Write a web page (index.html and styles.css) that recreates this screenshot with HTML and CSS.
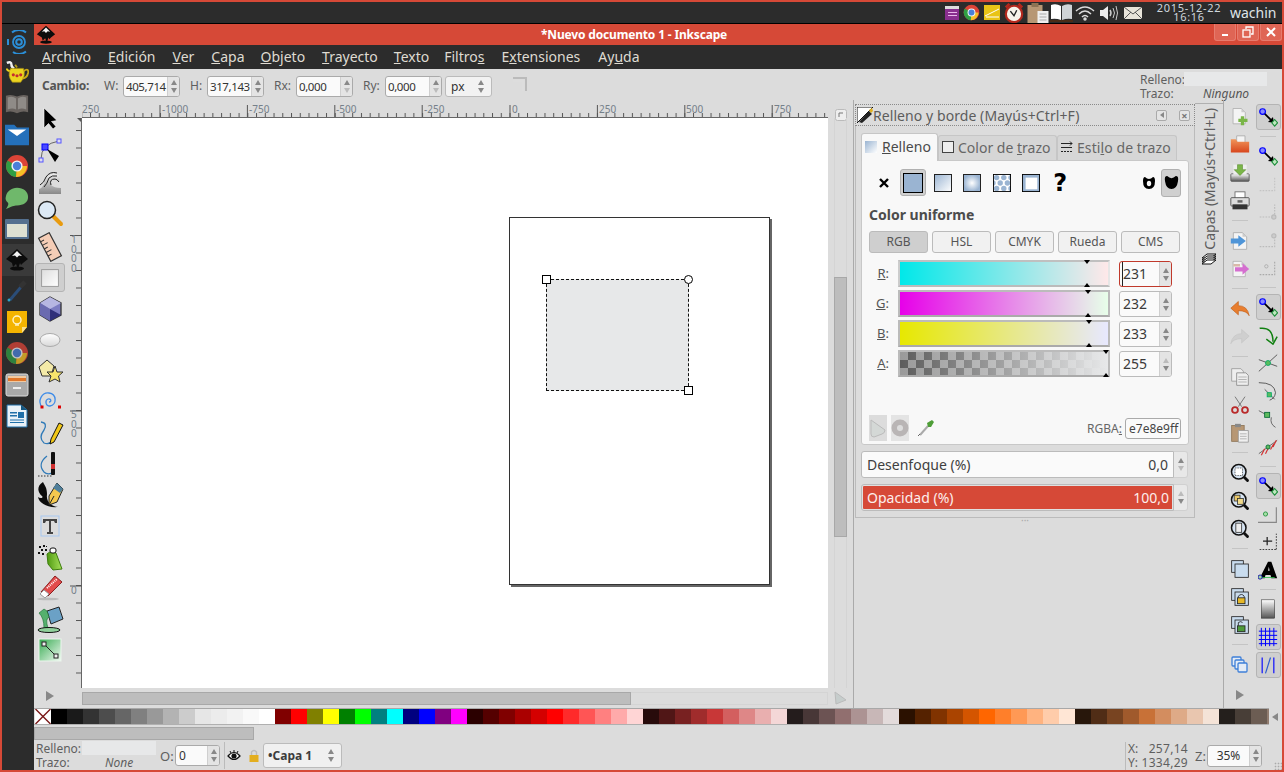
FILE: index.html
```html
<!DOCTYPE html>
<html lang="es">
<head>
<meta charset="utf-8">
<title>*Nuevo documento 1 - Inkscape</title>
<link rel="stylesheet" href="styles.css">
</head>
<body>
<svg class="defs" xmlns="http://www.w3.org/2000/svg">
  <defs>
    <linearGradient id="gGrey" x1="0" y1="0" x2="0" y2="1"><stop offset="0" stop-color="#eee"/><stop offset="1" stop-color="#888"/></linearGradient>
    <linearGradient id="gBlue" x1="0" y1="0" x2="1" y2="1"><stop offset="0" stop-color="#9ab4d2"/><stop offset="1" stop-color="#fff"/></linearGradient>
    <radialGradient id="gRad"><stop offset="0" stop-color="#fff"/><stop offset="1" stop-color="#9ab4d2"/></radialGradient>
    <linearGradient id="gGreen" x1="0" y1="0" x2="1" y2="1"><stop offset="0" stop-color="#35aa50"/><stop offset="1" stop-color="#f0faf1"/></linearGradient>
    <linearGradient id="gOrange" x1="0" y1="0" x2="0" y2="1"><stop offset="0" stop-color="#f0955a"/><stop offset="1" stop-color="#d8461c"/></linearGradient>
    <linearGradient id="gSq" x1="0" y1="0" x2="1" y2="1"><stop offset="0" stop-color="#ddd"/><stop offset="1" stop-color="#fff"/></linearGradient>
    <linearGradient id="gCyl" x1="0" y1="0" x2="0" y2="1"><stop offset="0" stop-color="#fff"/><stop offset="1" stop-color="#555"/></linearGradient>
    <linearGradient id="gEll" x1="0" y1="0" x2="0" y2="1"><stop offset="0" stop-color="#fff"/><stop offset="1" stop-color="#d8d8d8"/></linearGradient>
    <linearGradient id="gCan" x1="0" y1="0" x2="1" y2="0"><stop offset="0" stop-color="#4f9a10"/><stop offset="1" stop-color="#a6e05a"/></linearGradient>
  </defs>
  <symbol id="chrome" viewBox="0 0 24 24">
    <circle cx="12" cy="12" r="11" fill="#dc4437"/>
    <path d="M12 12L2.500 6.500A11 11 0 0 0 11 23Z" fill="#2f9e44"/>
    <path d="M12 12H22A11 11 0 0 1 11 23Z" fill="#f6c026"/>
    <circle cx="12" cy="12" r="5.600" fill="#f4f4f4"/>
    <circle cx="12" cy="12" r="4.200" fill="#4a80d8"/>
  </symbol>
  <symbol id="ink" viewBox="0 0 24 24">
    <path d="M12 1L23 11 18 15 16 17 15 15 13 21 11 16 8 19 7 15 1 11Z" fill="#0c0c0c"/>
    <path d="M12 3L17 8 14 7.500 12 9.500 10 7.500 7 8Z" fill="#f4f4f4"/>
    <ellipse cx="12" cy="20.500" rx="7" ry="2" fill="#0c0c0c"/>
  </symbol>
  <symbol id="snapnode" viewBox="0 0 24 24">
    <path d="M7 7L18 18" stroke="#000" stroke-width="2"/>
    <path d="M12 18L19 19 18 12Z" fill="#000"/>
    <circle cx="5.500" cy="5.500" r="3.400" fill="#8a8aff" stroke="#00f" stroke-width="1.400"/>
    <path d="M20 15L23.500 19 20 23 16.500 19Z" fill="#bfe7bf" stroke="#1c8f3a" stroke-width="1.300"/>
  </symbol>
  <symbol id="doc" viewBox="0 0 24 24">
    <path d="M4 2H15L20 7V22H4Z" fill="#f4f4f4" stroke="#aaa"/>
    <path d="M15 2V7H20Z" fill="#ccc"/>
  </symbol>
  <symbol id="lens" viewBox="0 0 24 24">
    <path d="M15 15L21 21" stroke="#111" stroke-width="3.400" stroke-linecap="round"/>
    <circle cx="10.500" cy="10.500" r="8.700" fill="#d7e4f2" stroke="#111" stroke-width="1.800"/>
  </symbol>
  <symbol id="squares" viewBox="0 0 24 24">
    <rect x="2" y="2" width="14" height="14" fill="#c9dcee" stroke="#222"/>
    <rect x="6" y="6" width="16" height="16" fill="#c9dcee" stroke="#222"/>
  </symbol>
</svg>

<header class="panel">
  <svg class="ind ind-s" viewBox="0 0 14 14"><rect width="14" height="14" fill="#8a2f8f"/><rect x="0" y="0" width="14" height="3" fill="#ddd"/><rect x="3" y="6" width="9" height="1" fill="#e8b8ea"/><rect x="3" y="9" width="9" height="1" fill="#e8b8ea"/></svg>
  <svg class="ind ind-c"><use href="#chrome"/></svg>
  <svg class="ind ind-n" viewBox="0 0 16 15"><rect width="16" height="15" fill="#e9c416"/><path d="M1 11L15 4M2 12H15" stroke="#fff"/></svg>
  <svg class="ind ind-k" viewBox="0 0 22 22"><path d="M2 5L6 1M20 5L16 1" stroke="#b3281d" stroke-width="3"/><circle cx="11" cy="12" r="9" fill="#f7f3ea" stroke="#b3281d" stroke-width="2.400"/><path d="M7 9L11 14 14 8" fill="none" stroke="#222" stroke-width="1.500"/></svg>
  <svg class="ind ind-p" viewBox="0 0 22 20"><rect x="0" y="2" width="15" height="18" fill="#b79774"/><rect x="4" y="0" width="7" height="4" fill="#8d7354"/><path d="M10 8H21V20H10Z" fill="#efefef"/><path d="M12 11H19M12 14H19M12 17H19" stroke="#aaa"/></svg>
  <svg class="ind ind-b" viewBox="0 0 23 20"><path d="M1 2Q6 0 11 3V17Q6 15 1 16Z" fill="#fff"/><path d="M12 3Q17 0 22 2V16Q17 15 12 17Z" fill="#cfd3d6"/><path d="M0 17H23V19H0Z" fill="#4a2c17"/></svg>
  <svg class="ind ind-w" viewBox="0 0 20 16" fill="none" stroke="#ddd" stroke-width="1.500"><path d="M1 6Q10 -2 19 6"/><path d="M4 9Q10 3 16 9"/><path d="M7 12Q10 9 13 12"/><circle cx="10" cy="14" r="1" fill="#ddd"/></svg>
  <svg class="ind ind-v" viewBox="0 0 20 16" fill="none" stroke="#ccc"><path d="M1 5H4L9 1V15L4 11H1Z" fill="#eee" stroke="none"/><path d="M11 5Q13 8 11 11" stroke-width="1.500"/><path d="M14 3Q17 8 14 13"/><path d="M17 1Q20 8 17 15"/></svg>
  <svg class="ind ind-m" viewBox="0 0 18 12"><rect width="18" height="12" fill="#e8e4da"/><path d="M0 0L9 7 18 0M0 12L7 5M18 12L11 5" fill="none" stroke="#555"/></svg>
  <div class="clock"><span>2015-12-22</span><span>16:16</span></div>
  <span class="user">wachin</span>
</header>

<div class="main">
  <nav class="launcher">
    <div class="lt"><svg viewBox="0 0 24 24" fill="none" stroke="#2b8fd8"><circle cx="14" cy="12" r="2.800" stroke-width="2"/><circle cx="14" cy="12" r="6" stroke-width="1.800"/><path d="M7 2.500A11 11 0 0 1 21 2.500M21 21.500A11 11 0 0 1 8 22M3 9V15" stroke-width="2"/></svg></div>
    <div class="lt"><svg viewBox="0 0 26 26"><path d="M2 2Q7 0 7 4 7 7 10 8" fill="none" stroke="#f2f2f2" stroke-width="2.600"/><path d="M11 4L13 7" stroke="#b49a18" stroke-width="2"/><path d="M6 8H20Q23 16 17 23H8Q2 16 6 8Z" fill="#ecd41f" stroke="#a88f12" stroke-width=".7"/><path d="M20 11Q26 7 25 13 24 18 19 19" fill="none" stroke="#c9a916" stroke-width="2"/><path d="M5 11Q2 10 2 8" fill="none" stroke="#ecd41f" stroke-width="2"/><circle cx="9" cy="15" r="1.700" fill="#c62e2e"/><circle cx="13" cy="16" r="1.700" fill="#c62e2e"/><circle cx="17" cy="15" r="1.700" fill="#c62e2e"/></svg></div>
    <div class="lt"><svg viewBox="0 0 26 22"><path d="M1 2Q7 0 13 3 19 0 25 2V20Q19 18 13 21 7 18 1 20Z" fill="#6a6460"/><path d="M3 4Q8 2 12 5V17Q8 15 3 17ZM14 5Q18 2 23 4V17Q18 15 14 17Z" fill="#8f8b87"/></svg></div>
    <div class="lt"><svg viewBox="0 0 26 22"><path d="M0 0H10L13 3H26V22H0Z" fill="#2470ba"/><path d="M3 5H23L13 12Z" fill="#fff"/></svg></div>
    <div class="lt"><svg><use href="#chrome"/></svg></div>
    <div class="lt"><svg viewBox="0 0 26 24"><path d="M13 1C20 1 25 5 25 11S20 20 13 20C10 20 7 21 1 24 4 20 4 18 3 17 1 15 0 13 1 10 2 5 7 1 13 1Z" fill="#6fb86b"/></svg></div>
    <div class="lt"><svg viewBox="0 0 24 20"><rect width="24" height="20" rx="1" fill="#54708f"/><rect x="2" y="5" width="20" height="13" fill="#dde0d2"/></svg></div>
    <div class="lt lt-on"><svg><use href="#ink"/></svg></div>
    <div class="lt"><svg viewBox="0 0 24 24"><path d="M5 21L16 8" stroke="#2b4d78" stroke-width="3"/><path d="M15 8L20 3" stroke="#333" stroke-width="5"/><circle cx="4" cy="21" r="1.500" fill="#2ba4c9"/></svg></div>
    <div class="lt"><svg viewBox="0 0 24 24"><path d="M2 1H22V17L17 23H2Z" fill="#f4b400"/><path d="M22 17L17 23V17Z" fill="#fbe08a"/><circle cx="12" cy="10" r="4" fill="none" stroke="#fff5cc" stroke-width="1.400"/><path d="M10 15H14" stroke="#fff5cc" stroke-width="1.400"/></svg></div>
    <div class="lt"><svg class="dim"><use href="#chrome"/></svg></div>
    <div class="lt"><svg viewBox="0 0 24 24"><rect x="1" y="1" width="22" height="22" rx="2" fill="#a9a9a9" stroke="#ddd"/><rect x="3" y="3" width="18" height="6" fill="#f1c9a0"/><rect x="3" y="5" width="18" height="3" fill="#e0762a"/><rect x="8" y="14" width="8" height="2" fill="#eee"/></svg></div>
    <div class="lt"><svg viewBox="0 0 22 24"><path d="M1 1H15L21 6V23H1Z" fill="#e9f2f8" stroke="#1f6fa8"/><path d="M15 1L21 6H15Z" fill="#15567f"/><rect x="4" y="8" width="7" height="1.500" fill="#1f6fa8"/><rect x="4" y="11" width="7" height="1.500" fill="#1f6fa8"/><rect x="12" y="8" width="6" height="6" fill="#1f6fa8"/><path d="M4 16H18M4 18.500H18" stroke="#1f6fa8"/></svg></div>
  </nav>

  <div class="window">
    <div class="titlebar">
      <svg class="appicon"><use href="#ink"/></svg>
      <span class="title">*Nuevo documento 1 - Inkscape</span>
      <div class="wbtns">
        <span class="wbtn"><svg viewBox="0 0 12 12"><path d="M3 9H9" stroke="#fff" stroke-width="2"/></svg></span>
        <span class="wbtn"><svg viewBox="0 0 12 12" fill="none" stroke="#fff" stroke-width="1.300"><rect x="1" y="4" width="7" height="7"/><path d="M4 3V1H11V8H9"/></svg></span>
        <span class="wbtn"><svg viewBox="0 0 12 12"><path d="M2 2L10 10M10 2L2 10" stroke="#fff" stroke-width="2"/></svg></span>
      </div>
    </div>
    <div class="menubar">
      <span><u>A</u>rchivo</span><span class="m2"><u>E</u>dición</span><span class="m3"><u>V</u>er</span><span class="m4"><u>C</u>apa</span><span class="m5"><u>O</u>bjeto</span><span class="m6"><u>T</u>rayecto</span><span class="m7"><u>T</u>exto</span><span class="m8">Filtro<u>s</u></span><span class="m9">E<u>x</u>tensiones</span><span class="m10">Ay<u>u</u>da</span>
    </div>
    <div class="cmdbar">
      <b class="cambio">Cambio:</b>
      <label class="cl cl-w">W:</label><span class="num"><span class="val">405,714</span><span class="spin"><i class="up"></i><i class="dn"></i></span></span>
      <label class="cl cl-h">H:</label><span class="num"><span class="val">317,143</span><span class="spin"><i class="up"></i><i class="dn"></i></span></span>
      <label class="cl cl-rx">Rx:</label><span class="num"><span class="val">0,000</span><span class="spin"><i class="up"></i><i class="dn off"></i></span></span>
      <label class="cl cl-ry">Ry:</label><span class="num"><span class="val">0,000</span><span class="spin"><i class="up"></i><i class="dn off"></i></span></span>
      <span class="unit">px<span class="spin bare"><i class="up"></i><i class="dn"></i></span></span>
      <svg class="corner" viewBox="0 0 16 16" fill="none" stroke="#bbb" stroke-width="2"><path d="M1 2H14V15"/><path d="M1 5H11V15" stroke="#ddd"/></svg>
      <div class="selstyle">
        <div class="ss-row"><span class="ss-l">Relleno:</span><span class="ss-sw"></span></div>
        <div class="ss-row"><span class="ss-l">Trazo:</span><em class="ss-n">Ninguno</em></div>
      </div>
    </div>

    <div class="work">
      <aside class="tools">
        <div class="tool"><svg viewBox="0 0 30 30"><path d="M9 3V23L13.500 18.500 18 24 21 21.500 16.500 16.500 22 15.500Z" fill="#000" stroke="#fff" stroke-width=".6"/></svg></div>
        <div class="tool"><svg viewBox="0 0 30 30" fill="none"><path d="M6 23Q6 8 24 5" stroke="#666"/><rect x="7" y="8" width="6" height="6" fill="#4a4aff" stroke="#00f"/><rect x="22" y="3" width="4" height="4" fill="#dde" stroke="#55f"/><rect x="4" y="22" width="4" height="4" fill="#dde" stroke="#55f"/><path d="M12 13L24 20 20 26Z" fill="#000"/></svg></div>
        <div class="tool"><svg viewBox="0 0 30 30"><path d="M4 27V22Q8 21 10 14 14 5 21 7 27 9 24 15 22 12 19 12 15 12 16 18 19 21 26 21V27Z" fill="url(#gGrey)"/><path d="M5 18Q9 16 11 10 15 4 22 6M9 20Q12 17 14 11 17 8 22 9M16 18Q14 12 20 12 22 12 24 15" fill="none" stroke="#222"/></svg></div>
        <div class="tool"><svg viewBox="0 0 30 30"><path d="M18 18L26 26" stroke="#e89b10" stroke-width="4" stroke-linecap="round"/><circle cx="12" cy="12" r="8.500" fill="#dce9f5" stroke="#222" stroke-width="1.500"/></svg></div>
        <div class="tool tool-gap"><svg viewBox="0 0 30 30"><g transform="rotate(-28 15 15)"><rect x="9" y="2" width="12" height="26" fill="#f5cdb6" stroke="#333" stroke-width="1.200"/><path d="M9 6H13M9 10H15M9 14H13M9 18H15M9 22H13" stroke="#333"/></g></svg></div>
        <div class="tool tool-on"><svg viewBox="0 0 30 30"><rect x="6" y="6" width="18" height="18" fill="url(#gSq)" stroke="#999"/></svg></div>
        <div class="tool"><svg viewBox="0 0 30 30"><path d="M15 3L26 9V21L15 27 5 21V9Z" fill="#7c7cc2" stroke="#333" stroke-width="1.300"/><path d="M15 3L26 9 15 15 5 9Z" fill="#b6b6e2"/><path d="M15 15L26 21 15 27Z" fill="#2f2f7a"/><path d="M5 9L15 15V27L5 21Z" fill="#6a6ab0"/></svg></div>
        <div class="tool"><svg viewBox="0 0 30 30"><ellipse cx="15" cy="15" rx="10" ry="6.500" fill="url(#gEll)" stroke="#aaa"/></svg></div>
        <div class="tool"><svg viewBox="0 0 30 30"><path d="M4 11L12 4 19 10 16 20 7 20Z" fill="#f4eaa8" stroke="#333"/><path d="M20 10L22 16 28 16 23.500 20 25 26 20 23 14 26 16 20 12 16 18 16Z" fill="#f7e46c" stroke="#333"/></svg></div>
        <div class="tool"><svg viewBox="0 0 30 30" fill="none"><path d="M7 20C2 14 7 5 14 6 22 7 22 18 15 19 10 19 10 13 13 12 16 11 17 15 14 15" stroke="#3d8be8" stroke-width="1.300"/><rect x="5.500" y="18.500" width="3" height="3" fill="#d00"/><rect x="23" y="18.500" width="3" height="3" fill="#d00"/></svg></div>
        <div class="tool"><svg viewBox="0 0 30 30" fill="none"><path d="M6 4Q13 5 9 12 3 20 9 25 14 27 17 23" stroke="#2f7ab8" stroke-width="1.300"/><path d="M24 5L28 7 19 24 15 26 16 21Z" fill="#f2c818" stroke="#111"/></svg></div>
        <div class="tool"><svg viewBox="0 0 30 30" fill="none"><path d="M12 7Q2 15 9 23 12 26 17 24" stroke="#2f7ab8" stroke-width="1.200"/><path d="M3 27H17" stroke="#333" stroke-dasharray="1.500 1.500"/><rect x="16" y="3" width="4" height="23" rx="1" fill="#111"/><rect x="16" y="15" width="4" height="5" fill="#d03030"/></svg></div>
        <div class="tool"><svg viewBox="0 0 30 30"><path d="M8 2C1 6 3 13 7 16 9 18 5 19 3 17 4 23 12 28 23 27 15 26 11 21 12 14 12 8 10 6 8 2Z" fill="#0c0c0c"/><path d="M22 3L28 9 22 22 14 25 14 16Z" fill="#f4c84e" stroke="#222"/><path d="M22 3L28 9 25 13 18 8Z" fill="#4f7f9a"/><path d="M14 25L19 16" stroke="#222"/></svg></div>
        <div class="tool"><svg viewBox="0 0 30 30"><rect x="6" y="5" width="18" height="20" fill="none" stroke="#a8c8f0"/><path d="M8 8H22V12H20L19 10H16V21H18V23H12V21H14V10H11L10 12H8Z" fill="#444"/></svg></div>
        <div class="tool"><svg viewBox="0 0 30 30"><path d="M12 12Q16 8 21 11L27 27 18 28 13 22Z" fill="url(#gCan)" stroke="#3e7d0d"/><rect x="15" y="6" width="6" height="5" rx="2" fill="#fff" stroke="#111"/><path d="M4 4h2v2h-2zM8 3h2v2h-2zM6 7h2v2h-2zM10 7h2v2h-2zM3 10h2v2h-2zM7 11h2v2h-2zM11 4h1v1h-1z" fill="#111"/></svg></div>
        <div class="tool"><svg viewBox="0 0 30 30"><path d="M20 3L27 9 13 23 6 19Z" fill="#e24c4c" stroke="#8a1f1f"/><path d="M9 17L5 21 10 25 14 21Z" fill="#fff" stroke="#999"/><path d="M12 15L22 6" stroke="#fff" stroke-dasharray="1 1" stroke-width="2"/><ellipse cx="13" cy="26" rx="11" ry="1.300" fill="#bbb"/></svg></div>
        <div class="tool"><svg viewBox="0 0 30 30"><path d="M12 7L24 3 28 15 16 20Z" fill="#6ba1c6" stroke="#222"/><path d="M12 7L9 5 4 9Q9 14 9 24H13Q10 15 14 13Z" fill="#55b06d" stroke="#1a6a30" stroke-width=".6"/><ellipse cx="14" cy="26" rx="11" ry="2.500" fill="#8fd09a" stroke="#111"/></svg></div>
        <div class="tool"><svg viewBox="0 0 30 30"><rect x="4" y="4" width="22" height="22" fill="url(#gGreen)" stroke="#eaf6ec"/><path d="M9 9L21 21" stroke="#222"/><rect x="7" y="7" width="4" height="4" fill="#eee" stroke="#222"/><rect x="19" y="19" width="4" height="4" fill="#eee" stroke="#222"/></svg></div>
        <div class="tool tool-arrow"><i class="tri-r"></i></div>
      </aside>

      <section class="center">
        <div class="ruler-corner"></div>
        <svg class="ruler-top" viewBox="0 0 746 18">
          <defs>
            <pattern id="tickT" patternUnits="userSpaceOnUse" x="8" y="0" width="8.740" height="18"><rect x="0" y="13" width="1" height="4" fill="#555"/></pattern>
          </defs>
          <rect width="746" height="17" fill="url(#tickT)"/>
          <rect y="17" width="746" height="1" fill="#666"/>
          <path d="M78 5V17M165.400 5V17M252.800 5V17M340.200 5V17M428 5V17M515.400 5V17M602.800 5V17M690.200 5V17" stroke="#555"/>
          <g class="rt">
            <text x="0" y="13">250</text><text x="80" y="13">-1000</text><text x="167" y="13">-750</text><text x="254" y="13">-500</text><text x="342" y="13">-250</text><text x="430" y="13">0</text><text x="517" y="13">250</text><text x="604" y="13">500</text><text x="692" y="13">750</text>
          </g>
        </svg>
        <svg class="ruler-left" viewBox="0 0 12 570">
          <defs>
            <pattern id="tickL" patternUnits="userSpaceOnUse" x="0" y="12" width="12" height="17.500"><rect x="6" y="0" width="6" height="1" fill="#555"/></pattern>
          </defs>
          <rect width="11" height="570" fill="url(#tickL)"/>
          <rect x="11" width="1" height="570" fill="#666"/>
          <path d="M7 0H11V4Z" fill="#555"/>
          <path d="M0 117.500H12M0 293H12M0 468H12" stroke="#555"/>
          <g class="rt">
            <text x="1" y="125">1</text><text x="1" y="134.500">0</text><text x="1" y="144">0</text><text x="1" y="153.500">0</text>
            <text x="1" y="300">5</text><text x="1" y="309.500">0</text><text x="1" y="319">0</text>
            <text x="1" y="476">0</text>
          </g>
        </svg>
        <div class="canvas">
          <div class="page">
            <div class="sel">
              <i class="h h-tl"></i><i class="h h-tr"></i><i class="h h-br"></i>
            </div>
          </div>
        </div>
        <div class="vscroll">
          <svg class="vlock" viewBox="0 0 14 14" fill="none" stroke="#777"><rect x="1.500" y="1.500" width="11" height="11" rx="2" fill="#eee" stroke="#bbb"/><path d="M5 9V5M5 5H9"/></svg>
          <div class="vtrough"><div class="vthumb"></div></div>
        </div>
        <div class="hspacer"></div>
        <div class="htrough"><div class="hthumb"></div></div>
        <div class="cmsbtn"><svg viewBox="0 0 14 14"><path d="M2 1L13 9 3 13Z" fill="#c6cdcc" stroke="#bbb"/></svg></div>
      </section>

      <section class="dock">
        <div class="dock-title">
          <svg class="dt-ic" viewBox="0 0 16 16"><path d="M0 0H16L0 16Z" fill="#fff" stroke="#111"/><path d="M2 15L12 4 15 7 5 16Z" fill="#222"/><path d="M12 3L15 1 16 4 14 6Z" fill="#e0b020"/></svg>
          <span class="dt-txt">Relleno y borde (Mayús+Ctrl+F)</span>
          <span class="dt-btn dt-a"><i class="tri-l"></i></span>
          <span class="dt-btn dt-x">×</span>
        </div>
        <div class="dock-body">
          <div class="tabs">
            <div class="tab tab-on"><svg class="tabic" viewBox="0 0 12 12"><rect width="12" height="12" fill="url(#gBlue)"/></svg><span><u>R</u>elleno</span></div>
            <div class="tab tab-2"><svg class="tabic" viewBox="0 0 12 12"><rect x=".5" y=".5" width="11" height="11" fill="#eee" stroke="#444"/></svg><span>Color de <u>t</u>razo</span></div>
            <div class="tab tab-3"><svg class="tabic" viewBox="0 0 12 12" fill="none" stroke="#222"><path d="M0 2.500H11M0 6.500H11"/><path d="M0 10.500H11" stroke-dasharray="2 1"/><path d="M9 .5L11 2.500 9 4.500"/></svg><span>Esti<u>l</u>o de trazo</span></div>
          </div>
          <div class="fillpanel">
            <div class="paints">
              <span class="pb"><svg viewBox="0 0 14 14"><path d="M3 3L11 11M11 3L3 11" stroke="#000" stroke-width="2.400"/></svg></span>
              <span class="pb pb-on"><svg viewBox="0 0 20 20"><rect x=".5" y=".5" width="19" height="19" fill="#9ab4d2" stroke="#000"/></svg></span>
              <span class="pb"><svg viewBox="0 0 18 18"><rect x=".5" y=".5" width="17" height="17" fill="url(#gBlue)" stroke="#222"/></svg></span>
              <span class="pb"><svg viewBox="0 0 18 18"><rect x=".5" y=".5" width="17" height="17" fill="url(#gRad)" stroke="#222"/></svg></span>
              <span class="pb"><svg viewBox="0 0 20 20"><rect width="20" height="20" fill="#fff"/><g fill="#9ab4d2"><circle cx="4" cy="4" r="3"/><circle cx="12" cy="4" r="3"/><circle cx="20" cy="4" r="3"/><circle cx="0" cy="10" r="3"/><circle cx="8" cy="10" r="3"/><circle cx="16" cy="10" r="3"/><circle cx="4" cy="16" r="3"/><circle cx="12" cy="16" r="3"/><circle cx="20" cy="16" r="3"/></g><rect x=".5" y=".5" width="19" height="19" fill="none" stroke="#000"/></svg></span>
              <span class="pb"><svg viewBox="0 0 20 20"><rect x=".5" y=".5" width="19" height="19" fill="#9ab4d2" stroke="#000"/><rect x="4" y="4" width="13" height="13" fill="#fff"/></svg></span>
              <span class="pb pb-q">?</span>
              <span class="rule-a"><svg viewBox="0 0 14 14"><path d="M3 1Q1 1 1 5 1 13 7 13 13 13 13 5 13 1 11 1 9 3 7 3 5 3 3 1Z" fill="#000"/><ellipse cx="7" cy="7.500" rx="2.200" ry="2.700" fill="#f8f8f8"/></svg></span>
              <span class="rule-b"><svg viewBox="0 0 14 14"><path d="M3 1Q0 1 1 6 2 13 7 13 12 13 13 6 14 1 11 1 9 3 7 3 5 3 3 1Z" fill="#000"/></svg></span>
            </div>
            <div class="cu">Color uniforme</div>
            <div class="modes">
              <span class="mode mode-on">RGB</span><span class="mode">HSL</span><span class="mode">CMYK</span><span class="mode">Rueda</span><span class="mode">CMS</span>
            </div>
            <div class="chan">
              <span class="cl2"><u>R</u>:</span>
              <div class="slider s-r"><i class="mk mk-t m-r"></i><i class="mk mk-b m-r"></i></div>
              <span class="num2 foc"><span class="val2 cursor">231</span><span class="spin"><i class="up"></i><i class="dn"></i></span></span>
            </div>
            <div class="chan">
              <span class="cl2"><u>G</u>:</span>
              <div class="slider s-g"><i class="mk mk-t m-g"></i><i class="mk mk-b m-g"></i></div>
              <span class="num2"><span class="val2">232</span><span class="spin"><i class="up"></i><i class="dn"></i></span></span>
            </div>
            <div class="chan">
              <span class="cl2"><u>B</u>:</span>
              <div class="slider s-b"><i class="mk mk-t m-b"></i><i class="mk mk-b m-b"></i></div>
              <span class="num2"><span class="val2">233</span><span class="spin"><i class="up"></i><i class="dn"></i></span></span>
            </div>
            <div class="chan">
              <span class="cl2"><u>A</u>:</span>
              <div class="slider s-a"><i class="mk mk-t m-a"></i><i class="mk mk-b m-a"></i></div>
              <span class="num2"><span class="val2">255</span><span class="spin"><i class="up off"></i><i class="dn"></i></span></span>
            </div>
            <div class="pfoot">
              <span class="cwbtn"><svg viewBox="0 0 18 26"><path d="M2 5L16 15Q16 18 13 19L5 22Q2 22 2 19Z" fill="#d4d8d6" stroke="#bbb"/></svg></span>
              <span class="cwbtn cw2"><svg viewBox="0 0 18 26"><circle cx="9" cy="13" r="8.500" fill="#b9b5b5"/><circle cx="9" cy="13" r="3" fill="#ddd"/></svg></span>
              <svg class="drop" viewBox="0 0 18 18"><path d="M3 16L11 7" stroke="#aaa" stroke-width="2"/><path d="M10 4L15 1 17 3 14 8 11 8Z" fill="#4f9e38"/><path d="M1 17L3 15" stroke="#666"/></svg>
              <span class="rgba-l">RGBA<u>:</u></span>
              <span class="rgba">e7e8e9ff</span>
            </div>
          </div>
          <div class="wide"><div class="wide-v"><span>Desenfoque (%)</span><span>0,0</span></div><span class="spin wsp"><i class="up"></i><i class="dn off"></i></span></div>
          <div class="wide wide-op"><div class="wide-v"><span>Opacidad (%)</span><span>100,0</span></div><span class="spin wsp"><i class="up off"></i><i class="dn"></i></span></div>
          <div class="grip">···</div>
        </div>
      </section>

      <aside class="capas">
        <div class="capas-in">
          <svg class="capas-ic" viewBox="0 0 16 12" fill="#fff" stroke="#111"><path d="M1 5L6 1H15L10 5Z"/><path d="M1 7L6 3H15L10 7Z"/><path d="M1 9L6 5H15L10 9Z"/><path d="M1 11L6 7H15L10 11Z"/></svg>
          <span>Capas (Mayús+Ctrl+L)</span>
        </div>
      </aside>

      <aside class="cmds">
        <div class="ci"><svg viewBox="0 0 24 24"><use href="#doc" width="22" height="22"/><path d="M13 11H17V14H21V18H17V22H13V18H10V14H13Z" fill="#7ab648"/></svg></div>
        <div class="ci"><svg viewBox="0 0 24 24"><path d="M8 1H18V10H8Z" fill="#f4f4f4" stroke="#aaa"/><path d="M1 5H7L9 8H23V21H1Z" fill="url(#gOrange)"/></svg></div>
        <div class="ci"><svg viewBox="0 0 24 24"><rect x="1" y="13" width="22" height="9" rx="1" fill="url(#gCyl)" stroke="#555"/><rect x="4" y="2" width="16" height="12" fill="#eee"/><path d="M9 2H15V8H19L12 15 5 8H9Z" fill="#7ab648" stroke="#4d8020" stroke-width=".6"/></svg></div>
        <div class="ci"><svg viewBox="0 0 24 24"><rect x="6" y="1" width="12" height="9" fill="#fff" stroke="#666"/><rect x="1" y="8" width="22" height="10" rx="1" fill="#dcdcdc" stroke="#444"/><rect x="3" y="16" width="18" height="6" fill="#333"/><rect x="9" y="11" width="6" height="3" fill="#666"/></svg></div>
        <div class="sep"></div>
        <div class="ci"><svg viewBox="0 0 24 24"><use href="#doc" width="24" height="24"/><path d="M1 9H10V5L19 12 10 19V15H1Z" fill="#4f95d8"/></svg></div>
        <div class="ci"><svg viewBox="0 0 24 24"><use href="#doc" width="22" height="24"/><rect x="4" y="6" width="8" height="3" fill="#d8b9a9"/><path d="M6 10H15V5L23 12 15 19V15H6Z" fill="#d56fd0"/></svg></div>
        <div class="sep"></div>
        <div class="ci"><svg viewBox="0 0 24 24"><path d="M1 11L10 3V8Q21 8 23 20 20 14 10 14V19Z" fill="#e87e2f" stroke="#c25d16" stroke-width=".8"/></svg></div>
        <div class="ci"><svg viewBox="0 0 24 24"><path d="M23 11L14 3V8Q3 8 1 20 4 14 14 14V19Z" fill="#cfcfcf" stroke="#c4c4c4" stroke-width=".8"/></svg></div>
        <div class="sep"></div>
        <div class="ci"><svg viewBox="0 0 24 24"><path d="M2 2H13L16 5V17H2Z" fill="#eee" stroke="#999"/><path d="M8 7H19L22 10V22H8Z" fill="#eee" stroke="#888"/><path d="M10 12H20M10 15H20M10 18H20" stroke="#aaa"/></svg></div>
        <div class="ci"><svg viewBox="0 0 24 24" fill="none" stroke="#666"><path d="M6 2L14 14M18 2L10 14"/><circle cx="6" cy="18" r="3.500" stroke="#b92a2a" stroke-width="2.200"/><circle cx="18" cy="18" r="3.500" stroke="#b92a2a" stroke-width="2.200"/></svg></div>
        <div class="ci"><svg viewBox="0 0 24 24"><rect x="2" y="3" width="15" height="19" fill="#b79774" stroke="#8d7354"/><rect x="6" y="1" width="7" height="4" fill="#888"/><path d="M10 9H22V23H10Z" fill="#f0f0f0" stroke="#999"/><path d="M12 13H20M12 16H20M12 19H20" stroke="#aaa"/></svg></div>
        <div class="sep"></div>
        <div class="ci"><svg viewBox="0 0 24 24"><use href="#lens"/><rect x="6" y="6" width="9" height="9" fill="#fff" stroke="#333" stroke-dasharray="1 1"/></svg></div>
        <div class="ci"><svg viewBox="0 0 24 24"><use href="#lens"/><rect x="5" y="5" width="7" height="7" fill="#eac868" stroke="#333"/><rect x="9" y="9" width="7" height="7" fill="#f3dc8c" stroke="#333"/></svg></div>
        <div class="ci"><svg viewBox="0 0 24 24"><use href="#lens"/><rect x="7" y="5" width="7" height="11" fill="#eee" stroke="#333"/></svg></div>
        <div class="sep"></div>
        <div class="ci"><svg viewBox="0 0 24 24"><use href="#squares"/></svg></div>
        <div class="ci"><svg viewBox="0 0 24 24"><use href="#squares"/><path d="M10 13V11Q14 7 17 11V13" fill="none" stroke="#222"/><rect x="9" y="13" width="9" height="7" fill="#e6b829" stroke="#222"/></svg></div>
        <div class="ci"><svg viewBox="0 0 24 24"><use href="#squares"/><path d="M10 13V9Q13 7 15 9" fill="none" stroke="#222"/><rect x="9" y="13" width="9" height="7" fill="#4d9a3a" stroke="#222"/></svg></div>
        <div class="sep"></div>
        <div class="ci"><svg class="ci-s" viewBox="0 0 18 18" fill="#e4ecf6" stroke="#3e7fd8" stroke-width="1.300"><rect x="1" y="1" width="9" height="9" rx="1"/><rect x="4" y="4" width="9" height="9" rx="1"/><rect x="7" y="7" width="9" height="9" rx="1"/></svg></div>
        <div class="ci ci-last"><i class="tri-r"></i></div>
      </aside>

      <aside class="snaps">
        <div class="si si-on"><svg><use href="#snapnode"/></svg></div>
        <div class="sep2"></div>
        <div class="si"><svg><use href="#snapnode"/></svg></div>
        <div class="si"><svg viewBox="0 0 24 24" fill="none" stroke="#c4c4c4" stroke-dasharray="2 1.500" stroke-width="1.400"><path d="M2 20H20V4"/></svg></div>
        <div class="si"><svg viewBox="0 0 24 24" fill="none" stroke="#bbb" stroke-dasharray="2 1.500" stroke-width="1.400"><path d="M2 18H20V3"/><circle cx="19" cy="18" r="2.500" fill="#ccc" stroke-dasharray="none"/></svg></div>
        <div class="si"><svg viewBox="0 0 24 24" fill="none" stroke="#bbb" stroke-dasharray="2 1.500" stroke-width="1.400"><path d="M2 20H20V3"/><circle cx="19" cy="7" r="2.500" fill="#ccc" stroke-dasharray="none"/></svg></div>
        <div class="si"><svg viewBox="0 0 24 24" fill="none" stroke="#aaa" stroke-dasharray="2 1.500" stroke-width="1.400"><path d="M2 20H20V3"/><circle cx="10" cy="10" r="2" stroke-dasharray="none" stroke-width="1"/></svg></div>
        <div class="sep2"></div>
        <div class="si si-on"><svg><use href="#snapnode"/></svg></div>
        <div class="si"><svg viewBox="0 0 24 24" fill="none"><path d="M2 4Q18 2 18 20" stroke="#118011" stroke-width="1.800"/><path d="M10 17L18 23 23 14" stroke="#118011" stroke-width="1.800"/></svg></div>
        <div class="si"><svg viewBox="0 0 24 24" fill="none"><path d="M1 22L23 2" stroke="#444"/><path d="M1 8L23 16" stroke="#444"/><circle cx="12" cy="12" r="3" fill="#5dbb5d" stroke="#0a6"/></svg></div>
        <div class="si"><svg viewBox="0 0 24 24" fill="none"><path d="M1 2Q20 2 21 14 20 21 14 23" stroke="#444"/><path d="M8 10L20 22" stroke="#444"/><rect x="11" y="14" width="5" height="5" fill="#5dbb5d" stroke="#0a6"/></svg></div>
        <div class="si"><svg viewBox="0 0 24 24" fill="none"><path d="M1 2L12 8M21 22Q14 18 16 10" stroke="#555"/><rect x="8" y="4" width="6" height="6" fill="#5dbb5d" stroke="#063"/></svg></div>
        <div class="si"><svg viewBox="0 0 24 24" fill="none"><path d="M1 20L23 4" stroke="#555"/><path d="M4 22L8 14M9 20L13 12M15 15L19 8M18 12L22 4" stroke="#d23030" stroke-width="1.400"/><circle cx="12" cy="12" r="2.500" fill="#5dbb5d" stroke="#063"/></svg></div>
        <div class="sep2"></div>
        <div class="si si-on"><svg><use href="#snapnode"/></svg></div>
        <div class="si"><svg viewBox="0 0 24 24" fill="none"><path d="M0 22H22V4" stroke="#888" stroke-width="1.400"/><circle cx="9" cy="12" r="2.500" fill="#a6e0a6" stroke="#1c8f3a"/></svg></div>
        <div class="si"><svg viewBox="0 0 24 24" fill="none" stroke="#222"><path d="M2 21H22M22 21V2" stroke-dasharray="2 1.500"/><path d="M6 11H17M11 6V16" stroke-width="1.500"/></svg></div>
        <div class="si"><svg viewBox="0 0 24 24"><path d="M12 2H16L23 22H16L15 18H9L8 22H2ZM12 13H14L13 8Z" fill="#000"/><path d="M2 21H20" stroke="#2fbf4f"/><circle cx="2.500" cy="20.500" r="2.500" fill="#9fd39f" stroke="#00a"/></svg></div>
        <div class="sep2"></div>
        <div class="si"><svg viewBox="0 0 24 24"><rect x="4" y="1" width="16" height="22" fill="url(#gCyl)" stroke="#222" stroke-width=".6"/></svg></div>
        <div class="si si-on"><svg viewBox="0 0 24 24" fill="none" stroke="#00f" stroke-width="1.200"><path d="M1 5H23M1 10H23M1 15H23M1 20H23M4 1V23M9 1V23M14 1V23M19 1V23"/></svg></div>
        <div class="si si-on"><svg viewBox="0 0 24 24" fill="none" stroke="#0a0aff" stroke-width="1.400"><path d="M5 3V22M19 3V22"/><path d="M9 22L15 3" stroke="#2c5cd0"/></svg></div>
      </aside>
    </div>

    <div class="palette">
      <div class="swatches">
        <span class="sw-x"><svg viewBox="0 0 16 16"><path d="M0 0L16 16M16 0L0 16" stroke="#7a1a1a" stroke-width="1.500"/></svg></span>
        <i style="background:#000000"></i><i style="background:#1a1a1a"></i><i style="background:#333333"></i><i style="background:#4d4d4d"></i><i style="background:#666666"></i><i style="background:#808080"></i><i style="background:#999999"></i><i style="background:#b3b3b3"></i><i style="background:#cccccc"></i><i style="background:#e6e6e6"></i><i style="background:#ececec"></i><i style="background:#f2f2f2"></i><i style="background:#f9f9f9"></i><i style="background:#ffffff"></i><i style="background:#800000"></i><i style="background:#ff0000"></i><i style="background:#808000"></i><i style="background:#ffff00"></i><i style="background:#008000"></i><i style="background:#00ff00"></i><i style="background:#008080"></i><i style="background:#00ffff"></i><i style="background:#000080"></i><i style="background:#0000ff"></i><i style="background:#800080"></i><i style="background:#ff00ff"></i><i style="background:#2b0000"></i><i style="background:#550000"></i><i style="background:#800000"></i><i style="background:#aa0000"></i><i style="background:#d40000"></i><i style="background:#ff0000"></i><i style="background:#ff2a2a"></i><i style="background:#ff5555"></i><i style="background:#ff8080"></i><i style="background:#ffaaaa"></i><i style="background:#ffd5d5"></i><i style="background:#280b0b"></i><i style="background:#501616"></i><i style="background:#782121"></i><i style="background:#a02c2c"></i><i style="background:#c83737"></i><i style="background:#d35f5f"></i><i style="background:#de8787"></i><i style="background:#e9afaf"></i><i style="background:#f4d7d7"></i><i style="background:#241c1c"></i><i style="background:#483737"></i><i style="background:#6c5353"></i><i style="background:#916f6f"></i><i style="background:#ac9393"></i><i style="background:#c8b7b7"></i><i style="background:#e3dbdb"></i><i style="background:#2b1100"></i><i style="background:#552200"></i><i style="background:#803300"></i><i style="background:#aa4400"></i><i style="background:#d45500"></i><i style="background:#ff6600"></i><i style="background:#ff7f2a"></i><i style="background:#ff9955"></i><i style="background:#ffb380"></i><i style="background:#ffccaa"></i><i style="background:#ffe6d5"></i><i style="background:#28170b"></i><i style="background:#502d16"></i><i style="background:#784421"></i><i style="background:#a05a2c"></i><i style="background:#c87137"></i><i style="background:#d38d5f"></i><i style="background:#deaa87"></i><i style="background:#e9c6af"></i><i style="background:#f4e3d7"></i><i style="background:#241f1c"></i><i style="background:#483e37"></i><i style="background:#6c5d53"></i><i style="background:#917c6f"></i>
      </div>
      <i class="tri-l pal-arrow"></i>
    </div>
    <div class="palscroll"><div class="palthumb"></div></div>

    <footer class="status">
      <div class="st-fs">
        <div class="st-row"><span class="st-l">Relleno:</span><span class="st-sw"></span></div>
        <div class="st-row"><span class="st-l">Trazo:</span><em class="st-n">None</em></div>
      </div>
      <span class="st-o">O:</span>
      <span class="num3"><span class="val3">0</span><span class="spin"><i class="up"></i><i class="dn"></i></span></span>
      <span class="st-sep"></span>
      <svg class="st-eye" viewBox="0 0 14 12"><path d="M1 6Q7 -1 13 6 7 13 1 6Z" fill="#fff" stroke="#111" stroke-width="1.200"/><circle cx="7" cy="6" r="2.600" fill="#111"/><path d="M3 1L4 3M7 0V2M11 1L10 3" stroke="#111"/></svg>
      <svg class="st-lock" viewBox="0 0 10 13"><path d="M2.500 6V3Q5 0 7.500 3V6" fill="none" stroke="#bbb" stroke-width="1.400"/><rect x="0.500" y="6" width="9" height="7" fill="#e3ae1f"/></svg>
      <span class="layer"><b>•Capa 1</b><span class="spin bare"><i class="up"></i><i class="dn"></i></span></span>
      <div class="st-coords">
        <span class="coord"><span>X:</span><span class="cv">257,14</span></span>
        <span class="coord"><span>Y:</span><span class="cv">1334,29</span></span>
      </div>
      <span class="st-z">Z:</span>
      <span class="num4"><span class="val4">35%</span><span class="spin"><i class="up"></i><i class="dn"></i></span></span>
      <span class="rgrip"></span>
    </footer>
  </div>
</div>
</body>
</html>
```
FILE: styles.css
```css
* { box-sizing: border-box; }
html, body { margin: 0; height: 100%; }
body {
  width: 1284px; height: 772px; overflow: hidden;
  background: #d64937; padding: 2px 2px 2px 2px;
  display: flex; flex-direction: column;
  font-family: "Noto Sans", "Open Sans", sans-serif; font-size: 13px; color: #3c3c3c;
}
i { font-style: normal; display: block; }
svg { display: block; }
.defs { width: 0; height: 0; overflow: hidden; }

/* top panel */
.panel { height: 22px; flex: none; background: #2c2c2c; display: flex; align-items: center; border-bottom: 1px solid #000; color: #dfdfdf; }
.ind { flex: none; }
.ind-s { width: 14px; height: 14px; margin-left: 943px; }
.ind-c { width: 17px; height: 17px; margin-left: 4px; }
.ind-n { width: 16px; height: 15px; margin-left: 4px; }
.ind-k { width: 22px; height: 20px; margin-left: 3px; }
.ind-p { width: 23px; height: 20px; margin-left: 2px; }
.ind-b { width: 23px; height: 20px; margin-left: 0; }
.ind-w { width: 20px; height: 16px; margin-left: 2px; }
.ind-v { width: 20px; height: 16px; margin-left: 4px; }
.ind-m { width: 18px; height: 12px; margin-left: 5px; }
.clock { margin-left: 13px; width: 68px; padding-bottom: 2px; display: flex; flex-direction: column; align-items: center; font-size: 11px; line-height: 9px; color: #cfd6dc; letter-spacing: .7px; }
.user { margin-left: 7px; font-size: 14px; color: #dfe4e8; }

.main { flex: 1; display: flex; min-height: 0; }

/* launcher */
.launcher { width: 32px; flex: none; background: #2c2c2c; padding-top: 2px; }
.lt { height: 31.200px; display: flex; align-items: center; justify-content: center; padding-right: 2px; }
.lt svg { width: 24px; height: 24px; }
.lt-on { background: #3a3a3a; }
.lt .dim { opacity: .75; }

/* window */
.window { flex: 1; display: flex; flex-direction: column; background: #dcdcdc; min-width: 0; }
.titlebar { height: 21px; flex: none; background: #d64937; display: flex; align-items: center; color: #fff; }
.appicon { width: 20px; height: 20px; margin-left: 2px; flex: none; }
.title { margin-left: 485px; font-weight: 700; font-size: 12px; letter-spacing: -.17px; color: #fff; white-space: nowrap; }
.wbtns { margin-left: auto; display: flex; align-self: flex-start; gap: 1px; }
.wbtn { width: 22px; height: 17px; background: #df6555; border: 1px solid #e67c6e; border-top: 0; border-radius: 0 0 3px 3px; display: flex; align-items: center; justify-content: center; }
.wbtn svg { width: 12px; height: 12px; }

.menubar { height: 24px; flex: none; background: #2c2c2c; color: #dfdbd2; font-size: 14px; display: flex; align-items: center; padding: 0 0 1px 8px; white-space: nowrap; }
.m2 { margin-left: 17px; } .m3 { margin-left: 17px; } .m4 { margin-left: 17px; } .m5 { margin-left: 16px; } .m6 { margin-left: 17px; } .m7 { margin-left: 16px; } .m8 { margin-left: 15px; } .m9 { margin-left: 17px; } .m10 { margin-left: 18px; }

/* command bar */
.cmdbar { height: 31px; flex: none; display: flex; align-items: flex-start; padding: 7px 0 0 8px; font-size: 12px; color: #5f5f5f; white-space: nowrap; }
.cambio { width: 62px; font-size: 12px; line-height: 20px; color: #555; letter-spacing: -.2px; }
.cl { line-height: 20px; }
.cl-w { width: 19px; }
.cl-h { width: 17px; margin-left: 10px; }
.cl-rx { width: 22px; margin-left: 10px; }
.cl-ry { width: 22px; margin-left: 10px; }
.num { width: 57px; height: 21px; display: flex; background: #fafafa; border: 1px solid #aaa; border-radius: 3px; color: #333; overflow: hidden; }
.val { flex: 1; padding-left: 2px; line-height: 19px; font-size: 11.500px; letter-spacing: -.4px; overflow: hidden; }
.spin { width: 12px; flex: none; background: #e4e4e4; display: flex; flex-direction: column; align-items: center; justify-content: center; gap: 3px; border-left: 1px solid #cfcfcf; }
.spin.bare { background: none; border: 0; }
.up { width: 0; height: 0; border: 3px solid transparent; border-top: 0; border-bottom: 5px solid #888; }
.dn { width: 0; height: 0; border: 3px solid transparent; border-bottom: 0; border-top: 5px solid #888; }
.off.up { border-bottom-color: #bbb; }
.off.dn { border-top-color: #bbb; }
.unit { width: 47px; height: 21px; margin-left: 3px; display: flex; justify-content: space-between; padding: 0 4px 0 5px; background: #f2f2f2; border: 1px solid #bbb; border-radius: 3px; line-height: 19px; color: #333; }
.corner { width: 16px; height: 16px; margin-left: 20px; margin-top: 0; }
.selstyle { margin-left: auto; margin-right: 15px; margin-top: -4px; width: 127px; }
.ss-row { display: flex; height: 14px; align-items: center; }
.ss-l { width: 44px; font-size: 12px; }
.ss-sw { width: 83px; height: 14px; background: #e7e8e9; }
.ss-n { margin-left: 19px; color: #555; font-size: 12px; }

/* work area */
.work { flex: none; height: 608px; display: flex; }
.tools { width: 36px; flex: none; padding: 4px 4px 0 0; display: flex; flex-direction: column; align-items: center; }
.tool { width: 30px; height: 31px; flex: none; display: flex; align-items: center; justify-content: center; }
.tool svg { width: 30px; height: 30px; }
.tool-gap { margin-top: 3px; }
.tool-on { height: 29px; margin: 1px 0; background: #cfcfcf; border: 1px solid #b4b4b4; border-radius: 3px; }
.tool-on svg { width: 28px; height: 28px; }
.tool-arrow { margin-top: 24px; height: 14px; }
.tri-r { width: 0; height: 0; border: 5px solid transparent; border-right: 0; border-left: 8px solid #888; }
.tri-l { width: 0; height: 0; border: 4px solid transparent; border-left: 0; border-right: 6px solid #888; }

.center { width: 784px; flex: none; display: grid; grid-template-columns: 12px 746px 25px; grid-template-rows: 18px 570px 20px; border-right: 1px solid #aaa; }
.ruler-corner { grid-column: 1; grid-row: 1; }
.ruler-top { grid-column: 2; grid-row: 1; width: 746px; height: 18px; }
.ruler-left { grid-column: 1; grid-row: 2; width: 12px; height: 570px; }
.rt { font-size: 10px; fill: #75808a; font-family: "Noto Sans", sans-serif; }
.canvas { grid-column: 2; grid-row: 2; background: #fff; position: relative; overflow: hidden; }
.page { position: absolute; left: 427px; top: 99px; width: 261px; height: 368px; background: #fff; border: 1px solid #333; box-shadow: 2px 2px 0 #666; }
.sel { position: absolute; left: 36px; top: 61px; width: 143px; height: 112px; background: #e7e8e9; border: 1px dashed #111; }
.h { position: absolute; width: 9px; height: 9px; background: #fff; border: 1px solid #000; }
.h-tl { left: -5px; top: -5px; }
.h-tr { right: -5px; top: -5px; border-radius: 50%; }
.h-br { right: -5px; bottom: -5px; }
.vscroll { grid-column: 3; grid-row: 1 / 3; display: flex; flex-direction: column; align-items: center; }
.vlock { width: 14px; height: 14px; margin-top: 8px; margin-bottom: -4px; flex: none; }
.vtrough { width: 13px; height: 570px; border: 1px solid #d4d4d4; border-width: 0 1px; }
.vthumb { width: 13px; height: 260px; margin-top: 159px; margin-left: -1px; background: #bdbdbd; border: 1px solid #a8a8a8; }
.hspacer { grid-column: 1; grid-row: 3; }
.htrough { grid-column: 2; grid-row: 3; height: 13px; margin-top: 4px; border: 1px solid #d4d4d4; }
.hthumb { width: 549px; height: 13px; margin: -1px 0 0 -1px; background: #bdbdbd; border: 1px solid #a8a8a8; }
.cmsbtn { grid-column: 3; grid-row: 3; padding: 3px 0 0 5px; }
.cmsbtn svg { width: 14px; height: 14px; }

/* dock */
.dock { width: 341px; flex: none; padding-top: 4px; display: flex; flex-direction: column; }
.dock-title { height: 22px; flex: none; margin-left: 1px; border: 1px dotted #8a8a8a; display: flex; align-items: center; padding-left: 1px; font-size: 14px; color: #5d5d5d; }
.dt-ic { width: 16px; height: 16px; flex: none; }
.dt-txt { white-space: nowrap; letter-spacing: .07px; }
.dt-btn { width: 11px; height: 11px; border: 1px solid #aaa; border-radius: 2px; background: #e4e4e4; display: flex; align-items: center; justify-content: center; font-size: 11px; line-height: 9px; font-weight: 700; color: #777; }
.dt-a { margin-left: auto; }
.dt-btn .tri-l { border-width: 3px; border-left: 0; border-right-width: 4px; }
.dt-x { margin-left: 12px; margin-right: 4px; }
.dock-body { margin-left: 1px; height: 392px; flex: none; padding: 7px 5px 0 5px; border: 1px solid #bbb; border-top: 0; }
.tabs { height: 27px; display: flex; align-items: flex-end; }
.tab { height: 25px; display: flex; align-items: center; padding: 0 0 2px 3px; background: #d6d6d6; border: 1px solid #c6c6c6; border-bottom: 0; border-radius: 3px 3px 0 0; font-size: 14px; color: #666; white-space: nowrap; }
.tab-on { width: 77px; height: 28px; margin-bottom: -1px; background: #f8f8f8; color: #4a4a4a; z-index: 1; position: relative; }
.tab-on .tabic { margin-right: 5px; }
.tab-2 { width: 119px; }
.tab-3 { width: 120px; letter-spacing: .08px; }
.tabic { width: 12px; height: 12px; flex: none; margin-right: 4px; }
.fillpanel { height: 285px; width: 328px; background: #f8f8f8; border: 1px solid #c8c8c8; border-radius: 0 3px 3px 3px; display: flex; flex-direction: column; padding: 8px 7px 0 7px; }
.paints { height: 27px; flex: none; display: flex; align-items: center; }
.pb { width: 29.300px; height: 27px; flex: none; display: flex; align-items: center; justify-content: center; }
.pb svg { width: 18px; height: 18px; }
.pb-on { width: 26px; margin: 0 2px; background: #d0d0d0; border: 1px solid #b0b0b0; border-radius: 3px; }
.pb-on svg { width: 20px; height: 20px; }
.pb:first-child svg { width: 14px; height: 14px; }
.pb-q { font-family: "DejaVu Sans", sans-serif; font-weight: 700; font-size: 24px; color: #000; }
.rule-a { margin-left: auto; width: 16px; }
.rule-a svg { width: 14px; height: 14px; }
.rule-b { width: 20px; height: 28px; margin-left: 3px; background: #d0d0d0; border: 1px solid #b0b0b0; border-radius: 3px; display: flex; align-items: center; justify-content: center; }
.rule-b svg { width: 15px; height: 15px; }
.cu { margin-top: 10px; font-weight: 700; font-size: 14px; color: #4c4c4c; line-height: 18px; }
.modes { display: flex; gap: 4px; margin-top: 7px; margin-bottom: 7px; }
.mode { width: 59px; height: 22px; flex: none; text-align: center; font-size: 12px; line-height: 20px; color: #555; background: #f1f1f1; border: 1px solid #bbb; border-radius: 3px; }
.mode-on { background: #cfcfcf; }
.chan { height: 30px; flex: none; display: flex; align-items: flex-start; }
.cl2 { width: 22px; padding-right: 2px; text-align: right; line-height: 27px; color: #555; font-size: 13px; }
.slider { width: 212px; height: 27px; margin-left: 7px; position: relative; border: 2px solid #bbb; border-bottom-color: #aaa; }
.s-r { background: linear-gradient(to right, rgb(0,232,233), rgb(255,232,233)); border-color: #c0c0c0 #e6e6e6 #bbb #ccc; }
.s-g { background: linear-gradient(to right, rgb(231,0,233), rgb(231,255,233)); }
.s-b { background: linear-gradient(to right, rgb(231,232,0), rgb(231,232,255)); }
.s-a { background: linear-gradient(to right, rgba(231,232,233,0), rgb(231,232,233)), conic-gradient(#5c5c5c 25%, #9a9a9a 0 50%, #5c5c5c 0 75%, #9a9a9a 0) 0 0 / 16px 16px; }
.mk { position: absolute; width: 0; height: 0; border: 3.500px solid transparent; }
.mk-t { top: -2px; border-bottom: 0; border-top: 4px solid #000; }
.mk-b { bottom: -2px; border-top: 0; border-bottom: 4px solid #000; }
.m-r { left: 184px; } .m-g { left: 185px; } .m-b { left: 186px; } .m-a { left: 203px; }
.num2 { width: 53px; height: 26px; margin-left: 9px; margin-top: 1px; display: flex; background: #fafafa; border: 1px solid #bbb; border-radius: 3px; overflow: hidden; }
.num2.foc { border-color: #c0392b; }
.val2 { flex: 1; padding-left: 3px; font-size: 14px; line-height: 24px; color: #3a3a3a; }
.cursor { box-shadow: inset 1px 0 0 #222; margin-left: 2px; padding-left: 1px; }
.pfoot { margin-top: 35px; display: flex; align-items: center; height: 26px; flex: none; }
.cwbtn { width: 18px; height: 26px; background: #dcdcdc; flex: none; display: block; }
.cwbtn svg { width: 18px; height: 26px; }
.cw2 { margin-left: 4px; background: #e4e4e4; }
.drop { width: 18px; height: 18px; margin-left: 8px; }
.rgba-l { margin-left: auto; font-size: 12px; color: #666; }
.rgba { width: 56px; height: 21px; margin-left: 3px; background: #fafafa; border: 1px solid #aaa; border-radius: 3px; font-size: 12px; line-height: 19px; padding-left: 3px; color: #444; overflow: hidden; white-space: nowrap; }
.wide { width: 327px; height: 27px; margin-top: 6px; display: flex; }
.wide-v { flex: 1; display: flex; justify-content: space-between; align-items: center; padding: 0 5px 1px; background: #fafafa; border: 1px solid #bbb; border-radius: 3px 0 0 3px; font-size: 14px; color: #404040; }
.wide-op .wide-v { background: #d64937; color: #fdeeec; border: 2px solid #e0e0e0; outline: 1px solid #bbb; outline-offset: -1px; padding: 0 3px 1px 4px; }
.wsp { width: 14px; border-radius: 0 3px 3px 0; background: #e8e8e8; border: 1px solid #d0d0d0; border-left: 0; }
.grip { text-align: center; line-height: 8px; height: 8px; color: #aaa; font-size: 10px; margin-top: 5px; }

/* capas */
.capas { width: 29px; flex: none; padding-top: 3px; border-right: 1px solid #aaa; }
.capas-in { height: 165px; border-top: 1px solid #b0b0b0; display: flex; flex-direction: column; align-items: center; padding-top: 4px; }
.capas-in span { writing-mode: vertical-rl; transform: rotate(180deg); font-size: 14px; color: #5c5c5c; white-space: nowrap; order: 1; }
.capas-ic { order: 2; width: 16px; height: 12px; margin-top: 3px; }

/* commands & snap */
.cmds { width: 31px; flex: none; padding-top: 3px; display: flex; flex-direction: column; align-items: center; }
.ci { height: 28px; flex: none; display: flex; align-items: center; justify-content: center; }
.ci svg { width: 20px; height: 20px; }
.ci .ci-s { width: 18px; height: 18px; }
.ci-last { margin-top: 2px; }
.sep { width: 16px; height: 12px; flex: none; border-bottom: 1px solid #c4c4c4; transform: translateY(-6px); }
.snaps { width: 27px; flex: none; padding: 3px 1px 0 0; display: flex; flex-direction: column; align-items: center; }
.si { width: 25px; height: 28px; flex: none; display: flex; align-items: center; justify-content: center; }
.si svg { width: 20px; height: 20px; }
.si-on { background: #cfcfcf; border: 1px solid #b4b4b4; border-radius: 3px; height: 26px; margin: 1px 0; }
.sep2 { width: 16px; height: 11px; flex: none; border-bottom: 1px solid #c4c4c4; transform: translateY(-5px); }

/* palette */
.palette { height: 17px; flex: none; display: flex; align-items: center; }
.swatches { width: 1235px; height: 17px; flex: none; display: flex; overflow: hidden; border-top: 1px solid #a8a8a8; border-bottom: 1px solid #b0b0b0; padding-left: 1px; }
.swatches i { width: 16px; height: 15px; flex: none; }
.sw-x { width: 16px; height: 15px; flex: none; background: #fff; }
.sw-x svg { width: 16px; height: 15px; }
.pal-arrow { margin-left: 3px; }
.palscroll { height: 16px; flex: none; padding-top: 2px; }
.palthumb { width: 220px; height: 13px; background: #bdbdbd; border: 1px solid #a8a8a8; }

/* status */
.status { flex: 1; display: flex; align-items: center; font-size: 12px; color: #5f5f5f; white-space: nowrap; min-height: 0; }
.st-fs { width: 124px; padding-left: 2px; flex: none; align-self: flex-start; }
.st-row { height: 14px; display: flex; align-items: center; }
.st-l { width: 46px; }
.st-sw { width: 74px; height: 14px; background: #e7e8e9; }
.st-n { margin-left: 23px; }
.st-o { margin-left: 2px; width: 15px; font-size: 13px; }
.num3 { width: 45px; height: 21px; display: flex; background: #fafafa; border: 1px solid #aaa; border-radius: 3px; overflow: hidden; }
.val3 { flex: 1; padding-left: 3px; line-height: 19px; color: #333; }
.st-sep { width: 1px; height: 27px; background: #bbb; margin-left: 4px; }
.st-eye { width: 14px; height: 12px; margin-left: 2px; }
.st-lock { width: 10px; height: 13px; margin-left: 8px; }
.layer { width: 79px; height: 25px; margin-left: 4px; display: flex; justify-content: space-between; padding: 0 4px; align-items: center; background: #f0f0f0; border: 1px solid #bbb; border-radius: 3px; color: #333; }
.layer b { font-size: 12px; color: #3c3c3c; }
.st-coords { margin-left: auto; width: 63px; padding-left: 2px; border-left: 1px solid #bbb; display: flex; flex-direction: column; line-height: 14px; font-size: 12px; }
.coord { display: flex; justify-content: space-between; }
.cv { letter-spacing: .3px; }
.st-z { margin-left: 7px; width: 12px; font-size: 13px; }
.num4 { width: 55px; height: 22px; margin-right: 12px; display: flex; background: #fafafa; border: 1px solid #aaa; border-radius: 3px; overflow: hidden; }
.val4 { flex: 1; text-align: center; line-height: 20px; color: #333; }
.rgrip { width: 8px; height: 8px; align-self: flex-end; background: radial-gradient(circle, #aaa 40%, transparent 50%) 0 0 / 3px 3px; }
```
